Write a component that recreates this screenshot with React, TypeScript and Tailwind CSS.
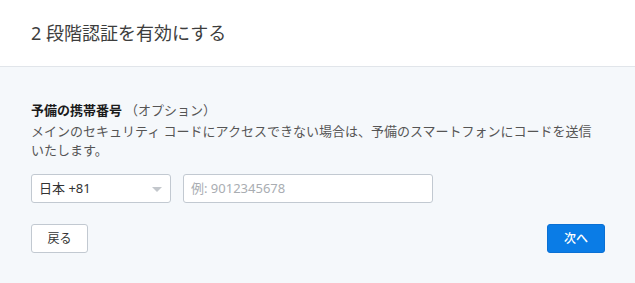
import React from "react";

export default function App() {
  return (
    <div
      className="w-[635px] h-[283px] flex flex-col bg-white overflow-hidden"
      style={{ fontFamily: '"Noto Sans", "Noto Sans CJK JP", sans-serif' }}
    >
      <div className="h-[67px] shrink-0 flex items-center px-[31px] border-b border-[#e1e5ea] bg-white">
        <h1 className="text-[18px] leading-[24px] text-[#3d3d3d] font-normal -mt-[1px]">
          2 段階認証を有効にする
        </h1>
      </div>
      <div className="flex-1 bg-[#f5f8fb] pl-[31px] pr-[30px] pt-[33px] flex flex-col">
        <div className="text-[13px] leading-[20px] text-[#1b1b1b]">
          <span className="font-bold">予備の携帯番号</span>
          <span className="text-[#555] ml-[3px]">（オプション）</span>
        </div>
        <p className="mt-[2px] text-[13px] leading-[19px] text-[#555]">
          メインのセキュリティ コードにアクセスできない場合は、予備のスマートフォンにコードを送信
          <br />
          いたします。
        </p>
        <div className="mt-[14px] flex gap-[12px]">
          <div className="w-[140px] h-[29px] bg-white border border-[#c2c9d1] rounded-[3px] flex items-center justify-between pl-[7px] pr-[8px]">
            <span className="text-[13px] text-[#333]">日本 +81</span>
            <svg width="10" height="5" viewBox="0 0 10 5" className="mt-[1px]">
              <polygon points="0,0 10,0 5,5" fill="#c3c7cc" />
            </svg>
          </div>
          <div className="w-[250px] h-[29px] bg-white border border-[#c2c9d1] rounded-[3px] flex items-center pl-[7px]">
            <span className="text-[13px] text-[#a9adb2]">例: 9012345678</span>
          </div>
        </div>
        <div className="mt-[21px] flex justify-between">
          <button className="w-[57px] h-[29px] bg-white border border-[#c2c9d1] rounded-[3px] text-[12px] text-[#333] flex items-center justify-center">
            戻る
          </button>
          <button className="w-[58px] h-[29px] bg-[#0a7ce6] border border-[#0a70d4] rounded-[3px] text-[12px] text-white font-medium flex items-center justify-center">
            次へ
          </button>
        </div>
      </div>
    </div>
  );
}
